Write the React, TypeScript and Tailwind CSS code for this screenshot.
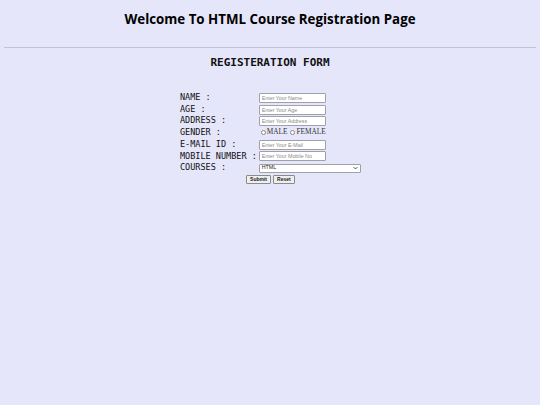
import React from 'react';

const rows: { label: string; placeholder?: string }[] = [
  { label: 'NAME :', placeholder: 'Enter Your Name' },
  { label: 'AGE :', placeholder: 'Enter Your Age' },
  { label: 'ADDRESS :', placeholder: 'Enter Your Address' },
];

const rows2: { label: string; placeholder?: string }[] = [
  { label: 'E-MAIL ID :', placeholder: 'Enter Your E-Mail' },
  { label: 'MOBILE NUMBER :', placeholder: 'Enter Your Mobile No' },
];

function Field({ placeholder }: { placeholder?: string }) {
  return (
    <input
      type="text"
      placeholder={placeholder}
      className="w-[67px] h-[10px] bg-white border border-[#a0a0a8] rounded-[1px] px-[2px] text-[5.3px] font-['Liberation_Sans',sans-serif] placeholder:text-[#8a8a8a] outline-none"
    />
  );
}

function Label({ children }: { children: React.ReactNode }) {
  return (
    <div className="font-['DejaVu_Sans_Mono',monospace] text-[8.5px] text-[#111] leading-[11.7px] whitespace-pre pr-[2px]">
      {children}
    </div>
  );
}

export default function App() {
  return (
    <main className="w-[540px] h-[405px] bg-[#e6e6fa] overflow-hidden">
      <h1 className="pt-[10px] h-[18px] box-content text-center text-[13.3px] leading-[18px] font-bold font-['Open_Sans',sans-serif] text-black">
        Welcome To HTML Course Registration Page
      </h1>
      <hr className="mt-[19px] mx-[4px] border-t border-[#c4c4d0]" />
      <h2 className="mt-[8px] text-center font-['DejaVu_Sans_Mono',monospace] font-bold text-[11px] leading-[14px] text-[#111]">
        REGISTERATION FORM
      </h2>

      <form className="mt-[22px] flex justify-center" onSubmit={(e) => e.preventDefault()}>
        <div className="grid grid-cols-[auto_auto] items-center w-[180px]">
          {rows.map((r) => (
            <React.Fragment key={r.label}>
              <Label>{r.label}</Label>
              <Field placeholder={r.placeholder} />
            </React.Fragment>
          ))}
          <Label>GENDER :</Label>
          <div className="flex items-center font-['Liberation_Serif',serif] text-[7.3px] text-[#333] pl-[2px]">
            <span className="inline-block w-[5px] h-[5px] rounded-full border border-[#888] bg-white mr-[1px]" />
            MALE
            <span className="inline-block w-[5px] h-[5px] rounded-full border border-[#888] bg-white ml-[3px] mr-[1px]" />
            FEMALE
          </div>
          {rows2.map((r) => (
            <React.Fragment key={r.label}>
              <Label>{r.label}</Label>
              <Field placeholder={r.placeholder} />
            </React.Fragment>
          ))}
          <Label>COURSES :</Label>
          <div className="w-[102px] h-[9px] bg-white border border-[#a0a0a8] rounded-[1px] flex items-center justify-between px-[2px] font-['Liberation_Sans',sans-serif] text-[5.3px] text-[#222]">
            <span>HTML</span>
            <svg width="5" height="4" viewBox="0 0 10 6">
              <path d="M1 1l4 4 4-4" fill="none" stroke="#333" strokeWidth="1.6" />
            </svg>
          </div>
          <div className="col-span-2 flex justify-center gap-[2px] mt-[1px]">
            <button className="h-[9px] px-[3px] bg-[#efefef] border border-[#8a8a8a] rounded-[1px] text-[5px] leading-none font-bold font-['Liberation_Sans',sans-serif] text-[#222]">
              Submit
            </button>
            <button className="h-[9px] px-[3px] bg-[#efefef] border border-[#8a8a8a] rounded-[1px] text-[5px] leading-none font-bold font-['Liberation_Sans',sans-serif] text-[#222]">
              Reset
            </button>
          </div>
        </div>
      </form>
    </main>
  );
}
